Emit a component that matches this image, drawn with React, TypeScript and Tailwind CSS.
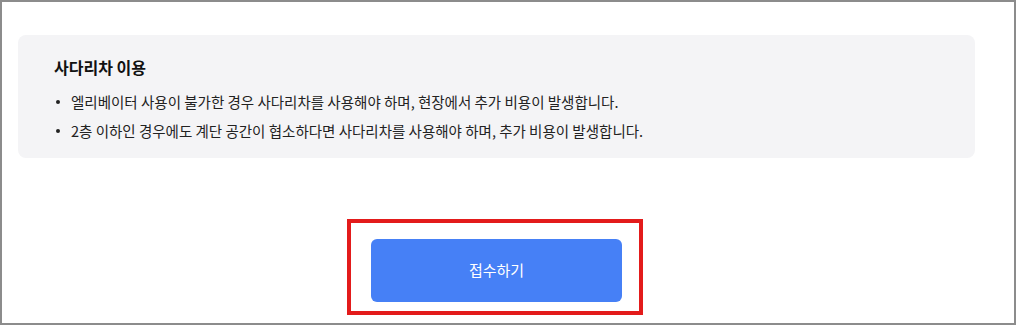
import React from "react";

const font = { fontFamily: '"Noto Sans CJK KR", "Noto Sans", sans-serif' };

export default function App() {
  const items = [
    "엘리베이터 사용이 불가한 경우 사다리차를 사용해야 하며, 현장에서 추가 비용이 발생합니다.",
    "2층 이하인 경우에도 계단 공간이 협소하다면 사다리차를 사용해야 하며, 추가 비용이 발생합니다.",
  ];
  return (
    <div className="w-[1024px] h-[325px] bg-white" style={font}>
      <div className="w-[1016px] h-[325px] border-2 border-[#8c8c8c] bg-white pl-[16px] pr-[39px] pt-[33px] flex flex-col">
        <div className="rounded-[8px] bg-[#f4f4f6] pl-[36px] pt-[20px] pb-[13px]">
          <div className="text-[16px] leading-[24px] font-bold text-[#111111]">사다리차 이용</div>
          <ul className="mt-[8px]">
            {items.map((t) => (
              <li key={t} className="flex items-center text-[14.5px] leading-[29px] text-[#222222]">
                <span className="w-[4px] h-[4px] rounded-full bg-[#222222] ml-[2px] mr-[11px]" />
                <span>{t}</span>
              </li>
            ))}
          </ul>
        </div>
        <div className="flex justify-center mt-[61px]">
          <div className="border-4 border-[#e31b1b] pt-[16px] pl-[20px] pr-[17px] pb-[9px] mr-[3px]">
            <button className="w-[251px] h-[63px] rounded-[6px] bg-[#4680f6] text-white text-[15px]">
              접수하기
            </button>
          </div>
        </div>
      </div>
    </div>
  );
}
